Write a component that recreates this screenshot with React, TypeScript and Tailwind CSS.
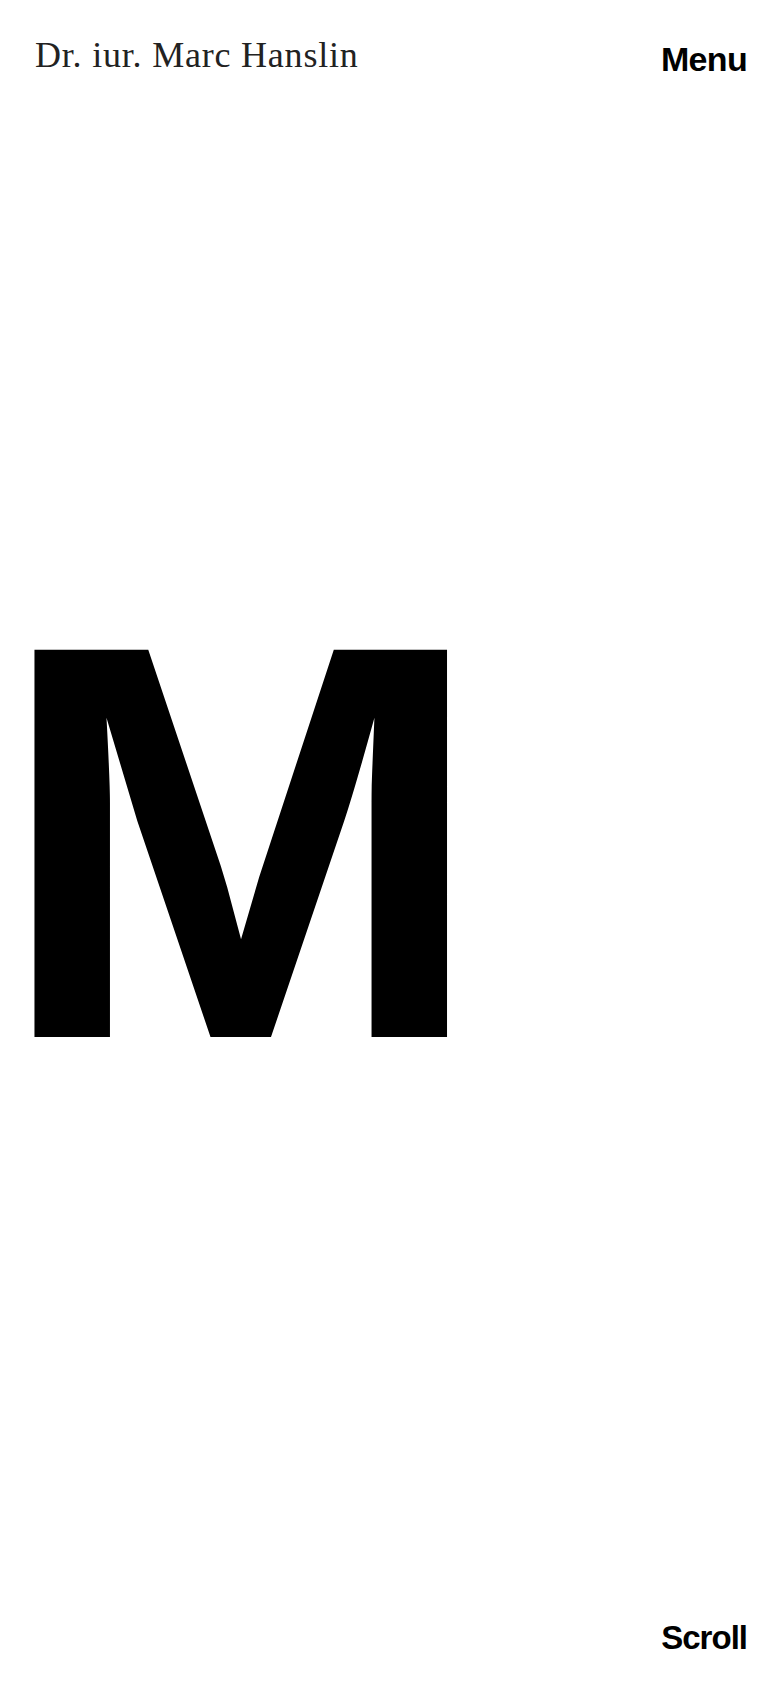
export default function App() {
  return (
    <div className="flex h-[1688px] w-full flex-col overflow-hidden bg-white text-black">
      <header className="flex items-start justify-between pl-[35px] pr-[33px] pt-[37px]">
        <a
          href="#"
          className="text-[36px] leading-none tracking-[0.022em] text-[#222]"
          style={{ fontFamily: '"Liberation Serif", serif' }}
        >
          Dr. iur. Marc Hanslin
        </a>
        <button
          type="button"
          className="mt-[5px] text-[34px] font-bold leading-none tracking-[-0.02em]"
          style={{ fontFamily: '"Liberation Sans", Arial, sans-serif' }}
        >
          Menu
        </button>
      </header>

      <main className="flex flex-1 items-center">
        <h1
          className="-mt-[13px] ml-[-5px] origin-left scale-x-[1.048] pr-[30px] text-[563px] font-bold leading-[1.12]"
          style={{ fontFamily: '"Liberation Sans", Arial, sans-serif' }}
        >
          M
        </h1>
      </main>

      <footer className="flex justify-end pr-[33px] pb-[34px]">
        <span
          className="text-[33px] font-bold leading-none tracking-[-0.03em]"
          style={{ fontFamily: '"Liberation Sans", Arial, sans-serif' }}
        >
          Scroll
        </span>
      </footer>
    </div>
  );
}
